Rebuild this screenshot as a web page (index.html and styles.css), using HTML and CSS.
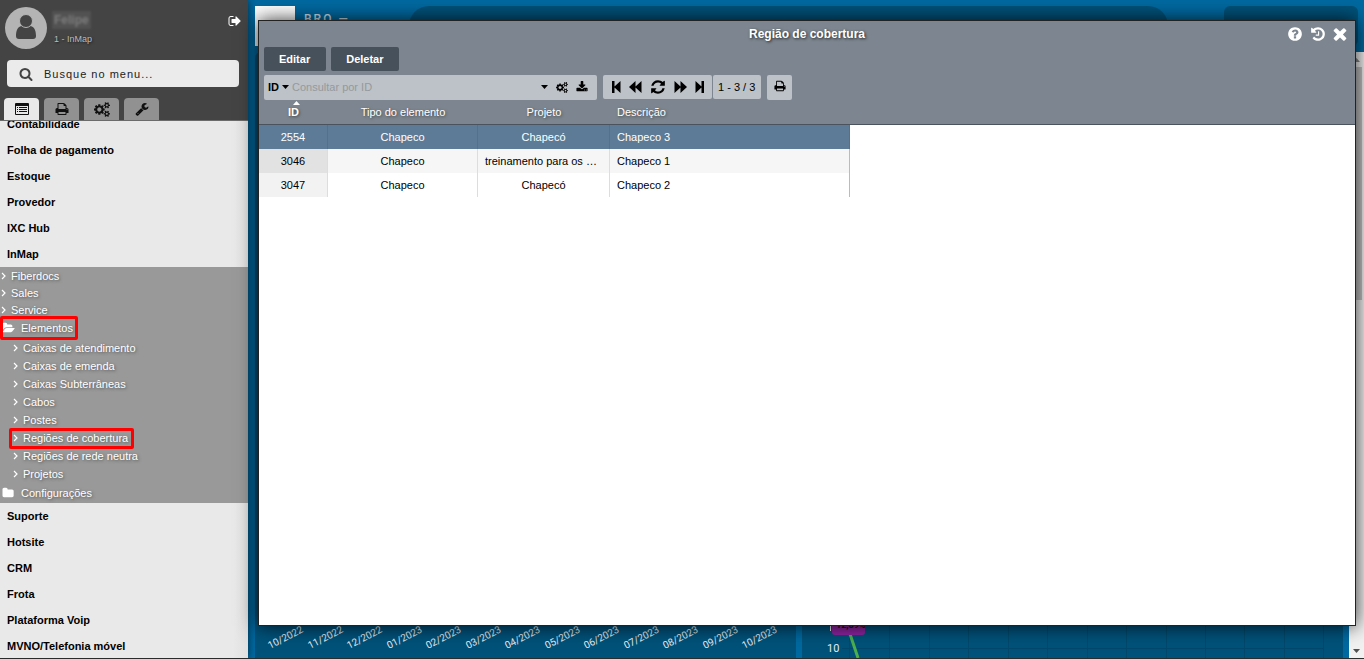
FILE: index.html
```html
<!DOCTYPE html>
<html lang="pt-BR">
<head>
<meta charset="utf-8">
<title>Região de cobertura</title>
<link rel="stylesheet" href="styles.css">
</head>
<body>
<svg class="sprite" aria-hidden="true">
  <symbol id="signout" viewBox="0 0 1792 1792"><path d="M704 1440q0 4 1 20t.5 26.500-3 23.500-10 19.500-20.500 6.500h-320q-119 0-203.500-84.500t-84.500-203.500v-704q0-119 84.500-203.500t203.500-84.500h320q13 0 22.500 9.500t9.500 22.500q0 4 1 20t.5 26.500-3 23.500-10 19.500-20.500 6.500h-320q-66 0-113 47t-47 113v704q0 66 47 113t113 47h312l11.500 1 11.500 3 8 5.500 7 9 2 13.500zm928-544q0 26-19 45l-544 544q-19 19-45 19t-45-19-19-45v-288h-448q-26 0-45-19t-19-45v-384q0-26 19-45t45-19h448v-288q0-26 19-45t45-19 45 19l544 544q19 19 19 45z"/></symbol>
  <symbol id="search" viewBox="0 0 1792 1792"><path d="M1216 832q0-185-131.500-316.500t-316.500-131.500-316.500 131.500-131.500 316.500 131.500 316.500 316.500 131.500 316.500-131.500 131.500-316.500zm512 832q0 52-38 90t-90 38q-54 0-90-38l-343-342q-179 124-399 124-143 0-273.500-55.500t-225-150-150-225-55.500-273.500 55.500-273.500 150-225 225-150 273.500-55.500 273.500 55.500 225 150 150 225 55.500 273.500q0 220-124 399l343 343q37 37 37 90z"/></symbol>
  <symbol id="list" viewBox="0 0 14 12"><path fill-rule="evenodd" d="M1 0h12q1 0 1 1v10q0 1-1 1H1q-1 0-1-1V1q0-1 1-1zM1 3v8h12V3zM2 4h1v1H2zM4 4h8v1H4zM2 6h1v1H2zM4 6h8v1H4zM2 8h1v1H2zM4 8h8v1H4z"/></symbol>
  <symbol id="print" viewBox="0 0 1792 1792"><path d="M448 1536h896v-256h-896v256zm0-640h896v-384h-160q-40 0-68-28t-28-68v-160h-640v640zm1152 64q0-26-19-45t-45-19-45 19-19 45 19 45 45 19 45-19 19-45zm128 0v416q0 13-9.500 22.500t-22.500 9.500h-224v160q0 40-28 68t-68 28h-960q-40 0-68-28t-28-68v-160h-224q-13 0-22.500-9.500t-9.500-22.500v-416q0-79 56.500-135.500t135.500-56.500h64v-544q0-40 28-68t68-28h672q40 0 88 20t76 48l152 152q28 28 48 76t20 88v256h64q79 0 135.500 56.500t56.500 135.500z"/></symbol>
  <symbol id="cogs" viewBox="0 0 1920 1792"><path d="M896 896q0-106-75-181t-181-75-181 75-75 181 75 181 181 75 181-75 75-181zm768 512q0-52-38-90t-90-38-90 38-38 90q0 53 37.500 90.500t90.500 37.500 90.500-37.500 37.500-90.500zm0-1024q0-52-38-90t-90-38-90 38-38 90q0 53 37.500 90.500t90.500 37.500 90.500-37.500 37.500-90.500zm-384 421v185q0 10-7 19.500t-16 10.500l-155 24q-11 35-32 76 34 48 90 115 7 11 7 20 0 12-7 19-23 30-82.500 89.500t-78.500 59.500q-11 0-21-7l-115-90q-37 19-77 31-11 108-23 155-7 24-30 24h-186q-11 0-20-7.500t-10-17.500l-23-153q-34-10-75-31l-118 89q-7 7-20 7-11 0-21-8-144-133-144-160 0-9 7-19 10-14 41-53t47-61q-23-44-35-82l-152-24q-10-1-17-9.500t-7-19.500v-185q0-10 7-19.500t16-10.500l155-24q11-35 32-76-34-48-90-115-7-11-7-20 0-12 7-20 22-30 82-89t79-59q11 0 21 7l115 90q34-18 77-32 11-108 23-154 7-24 30-24h186q11 0 20 7.500t10 17.500l23 153q34 10 75 31l118-89q8-7 20-7 11 0 21 8 144 133 144 160 0 8-7 19-12 16-42 54t-45 60q23 48 34 82l152 23q10 2 17 10.500t7 19.500zm640 533v140q0 16-149 31-12 27-30 52 51 113 51 138 0 4-4 7-122 71-124 71-8 0-46-47t-52-68q-20 2-30 2t-30-2q-14 21-52 68t-46 47q-2 0-124-71-4-3-4-7 0-25 51-138-18-25-30-52-149-15-149-31v-140q0-16 149-31 13-29 30-52-51-113-51-138 0-4 4-7 4-2 35-20t59-34 30-16q8 0 46 46.500t52 67.500q20-2 30-2t30 2q51-71 92-112l6-2q4 0 124 70 4 3 4 7 0 25-51 138 17 23 30 52 149 15 149 31zm0-1024v140q0 16-149 31-12 27-30 52 51 113 51 138 0 4-4 7-122 71-124 71-8 0-46-47t-52-68q-20 2-30 2t-30-2q-14 21-52 68t-46 47q-2 0-124-71-4-3-4-7 0-25 51-138-18-25-30-52-149-15-149-31v-140q0-16 149-31 13-29 30-52-51-113-51-138 0-4 4-7 4-2 35-20t59-34 30-16q8 0 46 46.500t52 67.500q20-2 30-2t30 2q51-71 92-112l6-2q4 0 124 70 4 3 4 7 0 25-51 138 17 23 30 52 149 15 149 31z"/></symbol>
  <symbol id="wrench" viewBox="0 0 1792 1792"><path d="M448 1472q0-26-19-45t-45-19-45 19-19 45 19 45 45 19 45-19 19-45zm644-420l-682 682q-37 37-90 37-52 0-91-37l-106-108q-38-36-38-90 0-53 38-91l681-681q39 98 114.500 173.500t173.500 114.500zm634-435q0 39-23 106-47 134-164.500 217.500t-258.500 83.500q-185 0-316.500-131.500t-131.500-316.500 131.500-316.500 316.500-131.500q58 0 121.500 16.500t107.500 46.500q16 11 16 28t-16 28l-293 169v224l193 107q5-3 79-48.500t135.500-81 70.500-35.500q15 0 23.500 10t8.500 25z"/></symbol>
  <symbol id="refresh" viewBox="0 0 1792 1792"><path d="M1639 1056q0 5-1 7-64 268-268 434.500t-478 166.500q-146 0-282.500-55t-243.500-157l-129 129q-19 19-45 19t-45-19-19-45v-448q0-26 19-45t45-19h448q26 0 45 19t19 45-19 45l-137 137q71 66 161 102t187 36q134 0 250-65t186-179q11-17 53-117 8-23 30-23h192q13 0 22.500 9.500t9.500 22.500zm25-800v448q0 26-19 45t-45 19h-448q-26 0-45-19t-19-45 19-45l138-138q-148-137-349-137-134 0-250 65t-186 179q-11 17-53 117-8 23-30 23h-199q-13 0-22.500-9.500t-9.500-22.500v-7q65-268 270-434.500t480-166.500q146 0 284 55.500t245 156.500l130-129q19-19 45-19t45 19 19 45z"/></symbol>
  <symbol id="download" viewBox="0 0 1792 1792"><path d="M1344 1344q0-26-19-45t-45-19-45 19-19 45 19 45 45 19 45-19 19-45zm256 0q0-26-19-45t-45-19-45 19-19 45 19 45 45 19 45-19 19-45zm128-224v320q0 40-28 68t-68 28h-1472q-40 0-68-28t-28-68v-320q0-40 28-68t68-28h465l135 136q58 56 136 56t136-56l136-136h464q40 0 68 28t28 68zm-325-569q17 41-14 70l-448 448q-18 19-45 19t-45-19l-448-448q-31-29-14-70 17-39 59-39h256v-448q0-26 19-45t45-19h256q26 0 45 19t19 45v448h256q42 0 59 39z"/></symbol>
  <symbol id="history" viewBox="0 0 1792 1792"><path d="M1664 896q0 156-61 298t-164 245-245 164-298 61q-172 0-327-72.500t-264-204.500q-7-10-6.500-22.500t8.500-20.500l137-138q10-9 25-9 16 2 23 12 73 95 179 147t225 52q104 0 198.500-40.500t163.500-109.500 109.500-163.500 40.500-198.500-40.500-198.500-109.500-163.500-163.500-109.500-198.500-40.500q-98 0-188 35.500t-160 101.500l137 138q31 30 14 69-17 40-59 40h-448q-26 0-45-19t-19-45v-448q0-42 40-59 39-17 69 14l130 129q107-101 244.500-156.500t284.500-55.500q156 0 298 61t245 164 164 245 61 298zm-640-288v448q0 14-9 23t-23 9h-320q-14 0-23-9t-9-23v-64q0-14 9-23t23-9h224v-352q0-14 9-23t23-9h64q14 0 23 9t9 23z"/></symbol>
  <symbol id="help" viewBox="0 0 1792 1792"><path d="M1024 1376v-192q0-14-9-23t-23-9h-192q-14 0-23 9t-9 23v192q0 14 9 23t23 9h192q14 0 23-9t9-23zm256-672q0-88-55.500-163t-138.500-116-170-41q-243 0-371 213-15 24 8 42l132 100q7 6 19 6 16 0 25-12 53-68 86-92 34-24 86-24 48 0 85.500 26t37.500 59q0 38-20 61t-68 45q-63 28-115.500 86.500t-52.500 125.500v36q0 14 9 23t23 9h192q14 0 23-9t9-23q0-19 21.500-49.500t54.500-49.500q32-18 49-28.500t46-35 44.500-48 28-60.500 12.500-81zm384 192q0 209-103 385.500t-279.500 279.500-385.500 103-385.500-103-279.500-279.500-103-385.500 103-385.500 279.500-279.500 385.500-103 385.500 103 279.500 279.500 103 385.500z"/></symbol>
  <symbol id="close" viewBox="256 256 1280 1408"><path d="M1490 1322q0 40-28 68l-136 136q-28 28-68 28t-68-28l-294-294-294 294q-28 28-68 28t-68-28l-136-136q-28-28-28-68t28-68l294-294-294-294q-28-28-28-68t28-68l136-136q28-28 68-28t68 28l294 294 294-294q28-28 68-28t68 28l136 136q28 28 28 68t-28 68l-294 294 294 294q28 28 28 68z"/></symbol>
  <symbol id="folder" viewBox="0 0 1920 1792"><path d="M1728 608v704q0 92-66 158t-158 66h-1216q-92 0-158-66t-66-158v-960q0-92 66-158t158-66h320q92 0 158 66t66 158v32h672q92 0 158 66t66 158z"/></symbol>
  <symbol id="folder-open" viewBox="0 0 1920 1792"><path d="M1879 952q0 31-31 66l-336 396q-43 51-120.500 86.500t-143.500 35.500h-1088q-34 0-60.500-13t-26.500-43q0-31 31-66l336-396q43-51 120.500-86.500t143.500-35.500h1088q34 0 60.500 13t26.500 43zm-343-344v160h-832q-94 0-197 47.500t-164 119.500l-337 396-5 6q0-4-.5-12.500t-.5-12.500v-960q0-92 66-158t158-66h320q92 0 158 66t66 158v32h544q92 0 158 66t66 158z"/></symbol>
  <symbol id="chevron" viewBox="0 0 5 8"><path d="M1 1l3 3-3 3" fill="none" stroke="currentColor" stroke-width="1.200"/></symbol>
  <symbol id="caret" viewBox="0 0 7 4"><path d="M0 0h7L3.500 4z"/></symbol>
  <symbol id="first" viewBox="0 0 9 12"><path d="M0 0h2.500v5.500L8.500 0v12l-6-5.500V12H0z"/></symbol>
  <symbol id="prev" viewBox="0 0 13 12"><path d="M0 6l6.500-6v5.500L12.500 0v12l-6-5.500V12z"/></symbol>
</svg>

<div class="app">
  <aside class="sidebar">
    <header class="profile">
      <div class="user">
        <svg class="avatar" viewBox="0 0 42 42"><circle cx="21" cy="21" r="21" fill="#b4b4b4"/><path d="M17.500 19C12 19 11 25 11 29q0 3 3 3h14q3 0 3-3c0-4-1-10-6.500-10-2 1.500-5 1.500-7 0z" fill="#444"/><circle cx="21" cy="14" r="6.500" fill="#444" stroke="#b4b4b4"/></svg>
        <div class="who"><span class="name">Felipe</span><span class="company">1 - InMap</span></div>
        <button class="logout" aria-label="Sair"><svg class="ic14"><use href="#signout"/></svg></button>
      </div>
      <label class="menu-search"><svg class="ic14"><use href="#search"/></svg><input type="text" placeholder="Busque no menu..." aria-label="Busque no menu"></label>
      <nav class="tabs">
        <button class="tab active" aria-label="Menu"><svg class="ic-list"><use href="#list"/></svg></button>
        <button class="tab" aria-label="Relatórios"><svg class="ic14"><use href="#print"/></svg></button>
        <button class="tab" aria-label="Configurações"><svg class="ic-cogs"><use href="#cogs"/></svg></button>
        <button class="tab" aria-label="Ferramentas"><svg class="ic14"><use href="#wrench"/></svg></button>
      </nav>
    </header>
    <nav class="menu-view">
      <div class="menu">
        <a class="item" href="#">Contabilidade</a>
        <a class="item" href="#">Folha de pagamento</a>
        <a class="item" href="#">Estoque</a>
        <a class="item" href="#">Provedor</a>
        <a class="item" href="#">IXC Hub</a>
        <a class="item" href="#">InMap</a>
        <div class="submenu">
          <a class="sub" href="#"><svg class="chev"><use href="#chevron"/></svg>Fiberdocs</a>
          <a class="sub" href="#"><svg class="chev"><use href="#chevron"/></svg>Sales</a>
          <a class="sub" href="#"><svg class="chev"><use href="#chevron"/></svg>Service</a>
          <a class="group marked" href="#"><svg class="fold"><use href="#folder-open"/></svg>Elementos</a>
          <div class="leaves">
            <a class="leaf" href="#"><svg class="chev"><use href="#chevron"/></svg>Caixas de atendimento</a>
            <a class="leaf" href="#"><svg class="chev"><use href="#chevron"/></svg>Caixas de emenda</a>
            <a class="leaf" href="#"><svg class="chev"><use href="#chevron"/></svg>Caixas Subterrâneas</a>
            <a class="leaf" href="#"><svg class="chev"><use href="#chevron"/></svg>Cabos</a>
            <a class="leaf" href="#"><svg class="chev"><use href="#chevron"/></svg>Postes</a>
            <a class="leaf marked" href="#"><svg class="chev"><use href="#chevron"/></svg>Regiões de cobertura</a>
            <a class="leaf" href="#"><svg class="chev"><use href="#chevron"/></svg>Regiões de rede neutra</a>
            <a class="leaf" href="#"><svg class="chev"><use href="#chevron"/></svg>Projetos</a>
          </div>
          <a class="group" href="#"><svg class="fold"><use href="#folder"/></svg>Configurações</a>
        </div>
        <a class="item" href="#">Suporte</a>
        <a class="item" href="#">Hotsite</a>
        <a class="item" href="#">CRM</a>
        <a class="item" href="#">Frota</a>
        <a class="item" href="#">Plataforma Voip</a>
        <a class="item" href="#">MVNO/Telefonia móvel</a>
      </div>
    </nav>
  </aside>

  <main class="dashboard">
    <header class="topbar">
      <div class="logo"></div>
      <span class="brand">BRO —</span>
      <div class="pill"></div>
      <div class="box"></div>
    </header>
    <div class="board">
      <section class="panel">
        <svg class="axis" viewBox="0 0 540 40" width="540" height="40">
          <g class="months">
            <text transform="translate(15 31) rotate(-27)">10/2022</text>
            <text transform="translate(55 31) rotate(-27)">11/2022</text>
            <text transform="translate(94 31) rotate(-27)">12/2022</text>
            <text transform="translate(134 31) rotate(-27)">01/2023</text>
            <text transform="translate(173 31) rotate(-27)">02/2023</text>
            <text transform="translate(213 31) rotate(-27)">03/2023</text>
            <text transform="translate(252 31) rotate(-27)">04/2023</text>
            <text transform="translate(292 31) rotate(-27)">05/2023</text>
            <text transform="translate(331 31) rotate(-27)">06/2023</text>
            <text transform="translate(371 31) rotate(-27)">07/2023</text>
            <text transform="translate(410 31) rotate(-27)">08/2023</text>
            <text transform="translate(450 31) rotate(-27)">09/2023</text>
            <text transform="translate(489 31) rotate(-27)">10/2023</text>
          </g>
        </svg>
      </section>
      <section class="panel">
        <svg class="axis" viewBox="0 0 541 40" width="541" height="40">
          <path class="grid" d="M47.500 0v40M87.500 0v40M127.500 0v40M166.500 0v40M206.500 0v40M245.500 0v40M285.500 0v40M324.500 0v40M364.500 0v40M403.500 0v40M442.500 0v40M482.500 0v40M521.500 0v40M40 30.500h482"/>
          <text class="tick" x="25" y="34">10</text>
          <path d="M28.500 6v7" stroke="#e6eef2"/>
          <path d="M46 10l10 30" fill="none" stroke="#4caf50" stroke-width="3"/>
          <rect x="30" y="-10" width="33" height="27" rx="3" fill="#8e24a0"/>
          <text class="value" x="34" y="10">12,89%</text>
        </svg>
      </section>
      <div class="scroll"><svg class="arrow flip"><use href="#caret"/></svg><div class="thumb"></div><svg class="arrow"><use href="#caret"/></svg></div>
    </div>
  </main>

  <section class="window" aria-labelledby="wtitle">
    <header class="titlebar">
      <h1 class="title" id="wtitle">Região de cobertura</h1>
      <div class="controls">
        <button aria-label="Ajuda"><svg class="ic16"><use href="#help"/></svg></button>
        <button aria-label="Histórico"><svg class="ic16"><use href="#history"/></svg></button>
        <button aria-label="Fechar"><svg class="ic-close"><use href="#close"/></svg></button>
      </div>
    </header>
    <div class="actions"><button class="act">Editar</button><button class="act">Deletar</button></div>
    <div class="toolbar">
      <div class="query">
        <button class="field">ID<svg class="caret"><use href="#caret"/></svg></button>
        <input type="text" placeholder="Consultar por ID" aria-label="Consultar por ID">
        <button aria-label="Opções"><svg class="caret"><use href="#caret"/></svg></button>
        <button aria-label="Filtros"><svg class="ic-cogs-s"><use href="#cogs"/></svg></button>
        <button aria-label="Exportar"><svg class="ic11"><use href="#download"/></svg></button>
      </div>
      <div class="pager">
        <div class="nav">
          <button aria-label="Primeira"><svg class="ic-first"><use href="#first"/></svg></button>
          <button aria-label="Anterior"><svg class="ic-prev"><use href="#prev"/></svg></button>
          <button aria-label="Atualizar"><svg class="ic16"><use href="#refresh"/></svg></button>
          <button aria-label="Próxima"><svg class="ic-prev mirror"><use href="#prev"/></svg></button>
          <button aria-label="Última"><svg class="ic-first mirror"><use href="#first"/></svg></button>
        </div>
        <span class="count">1 - 3 / 3</span>
      </div>
      <button class="printer" aria-label="Imprimir"><svg class="ic11"><use href="#print"/></svg></button>
    </div>
    <table class="records">
      <colgroup><col class="c-id"><col class="c-type"><col class="c-proj"><col class="c-desc"><col></colgroup>
      <thead><tr><th class="sorted"><svg class="sort"><use href="#caret"/></svg>ID</th><th>Tipo do elemento</th><th>Projeto</th><th class="left">Descrição</th><th></th></tr></thead>
      <tbody>
        <tr class="selected"><td>2554</td><td>Chapeco</td><td>Chapecó</td><td class="left">Chapeco 3</td><td></td></tr>
        <tr class="odd"><td>3046</td><td>Chapeco</td><td class="left">treinamento para os …</td><td class="left">Chapeco 1</td><td></td></tr>
        <tr><td>3047</td><td>Chapeco</td><td>Chapecó</td><td class="left">Chapeco 2</td><td></td></tr>
      </tbody>
    </table>
  </section>
</div>
</body>
</html>
```
FILE: styles.css
```css
*, *::after { box-sizing: border-box; }
body { margin: 0; font: 11px/18px "Liberation Sans", Arial, sans-serif; color: #000; }
button { margin: 0; padding: 0; border: 0; background: none; font: inherit; color: inherit; display: flex; align-items: center; justify-content: center; }
input { border: 0; outline: 0; background: none; padding: 0; font: inherit; color: #222; min-width: 0; flex: 1; }
a { color: inherit; text-decoration: none; }
svg { fill: currentColor; flex: none; display: block; }
.sprite { position: absolute; width: 0; height: 0; }
.ic11 { width: 12px; height: 12px; }
.ic14 { width: 14px; height: 14px; }
.ic16 { width: 16px; height: 16px; }
.ic-list { width: 14px; height: 12px; }
.ic-cogs { width: 16px; height: 15px; }
.ic-cogs-s { width: 12px; height: 11px; }
.ic-close { width: 14px; height: 15px; }
.ic-first { width: 9px; height: 12px; }
.ic-prev { width: 13px; height: 12px; }
.mirror { transform: scaleX(-1); }
.caret { width: 7px; height: 4px; }

.app { position: relative; display: flex; height: 100vh; overflow: hidden; border-bottom: 1px solid #2b2b2b; }

.sidebar { width: 248px; flex: none; display: flex; flex-direction: column; background: #e9e9e9; box-shadow: 0 0 8px rgba(0,0,0,.6); z-index: 1; }
.profile { background: #444; display: flex; flex-direction: column; border-bottom: 1px solid #6b6b6b; }
.user { display: flex; padding: 7px 6px 0 5px; height: 60px; gap: 5px; }
.avatar { width: 42px; height: 42px; }
.who { flex: 1; display: flex; flex-direction: column; gap: 1px; padding-top: 4px; }
.name { align-self: flex-start; font-size: 12px; font-weight: bold; color: #7c7c7c; background: #525252; padding: 0 2px; filter: blur(1px); }
.company { font-size: 9px; color: #bbb; padding-left: 2px; text-shadow: 1px 1px 2px #222; }
.logout { height: 28px; color: #fff; }
.menu-search { margin: 0 9px 11px 7px; height: 27px; background: #ebebeb; border-radius: 4px; display: flex; align-items: center; gap: 11px; padding-left: 12px; color: #444; }
.menu-search input { letter-spacing: 1px; }
.menu-search input::placeholder { color: #222; opacity: 1; }
.tabs { display: flex; gap: 5px; padding-left: 4px; }
.tab { width: 35px; height: 22px; background: #919191; border-radius: 4px 4px 0 0; color: #111; }
.tab.active { background: #e9e9e9; }
.menu-view { flex: 1; overflow: hidden; }
.menu { margin-top: -10px; display: flex; flex-direction: column; }
.item { line-height: 26px; padding-left: 7px; font-weight: bold; background: linear-gradient(90deg, #e9e9e9 94%, #e0e0e0); }
.submenu { background: #999; color: #fff; text-shadow: 1px 1px 3px #555; }
.sub, .leaf, .group { display: flex; align-items: center; position: relative; }
.sub { height: 17px; gap: 5px; padding-left: 1px; }
.leaves { margin-top: 1px; padding-left: 13px; }
.leaf { height: 18px; gap: 5px; }
.group { height: 20px; gap: 6px; padding-left: 2px; }
.chev { width: 5px; height: 8px; }
.fold { width: 13px; height: 12px; }
.marked::after { content: ""; position: absolute; border: 3px solid #f00; border-radius: 2px; }
.group.marked::after { left: 0; top: -2px; width: 78px; height: 24px; }
.leaf.marked::after { left: -4px; top: -1px; width: 125px; height: 21px; }

.dashboard { flex: 1; min-width: 0; display: flex; flex-direction: column; background: #0069a0; padding-left: 7px; }
.topbar { display: flex; height: 52px; padding-top: 6px; }
.logo { width: 40px; height: 40px; background: #fff; }
.brand { padding: 1px 0 0 9px; width: 114px; flex: none; font: 500 12px/24px Roboto, sans-serif; letter-spacing: 2px; color: #cfe0ea; }
.pill { flex: 1; margin-right: 56px; background: #00527a; border-radius: 20px 20px 0 0; }
.box { width: 134px; height: 40px; margin-right: 6px; background: #00527a; border-radius: 6px; }
.board { flex: 1; display: flex; gap: 6px; min-height: 0; }
.panel { flex: 1; background: #00527a; display: flex; flex-direction: column; justify-content: flex-end; overflow: hidden; border-radius: 6px 6px 0 0; }
.months { font: 10px Roboto, sans-serif; fill: #e6eef2; }
.tick { font: 11px Roboto, sans-serif; fill: #e6eef2; }
.value { font: bold 9px Roboto, sans-serif; fill: #111; }
.grid { stroke: #00486c; fill: none; }
.scroll { width: 15px; background: #f1f1f1; display: flex; flex-direction: column; align-items: center; color: #505050; padding-bottom: 5px; }
.arrow { width: 7px; height: 4px; }
.flip { transform: scaleY(-1); margin: 6px 0 5px; color: #888; }
.thumb { width: 11px; height: 233px; background: #c1c1c1; margin-bottom: auto; }

.window { position: absolute; top: 20px; right: 8px; bottom: 32px; left: 258px; z-index: 2; display: flex; flex-direction: column; background: #fff; border: 1px solid #222; box-shadow: 0 0 18px rgba(0,0,0,.8); }
.titlebar { display: grid; grid-template-columns: 1fr auto 1fr; align-items: center; height: 26px; background: #7d8690; color: #fff; }
.title { grid-column: 2; margin: 0; font-size: 12px; line-height: 24px; text-shadow: 1px 1px 3px #222; }
.controls { display: flex; gap: 7px; justify-content: flex-end; padding-right: 8px; }
.actions { display: flex; gap: 5px; padding: 0 5px 4px; background: #7d8690; }
.act { height: 24px; padding: 0 16px 0 15px; background: #47515c; color: #fff; font-weight: bold; border-radius: 2px; }
.toolbar { display: flex; gap: 6px; padding: 0 5px; background: #7d8690; height: 25px; align-items: flex-start; }
.query, .nav, .count, .printer { background: #bcc2c7; border-radius: 2px; }
.query { width: 333px; height: 25px; display: flex; align-items: center; gap: 8px; padding: 0 9px 1px 4px; }
.field { gap: 3px; font-weight: bold; }
.query input { margin-left: -5px; }
.query input::placeholder { color: #96999c; opacity: 1; }
.pager { display: flex; gap: 1px; height: 24px; }
.nav { display: flex; align-items: center; gap: 8px; padding: 0 8px 0 9px; }
.count { line-height: 24px; padding: 0 6px 0 5px; }
.printer { width: 25px; height: 25px; padding-bottom: 4px; }

.records { width: 100%; border-collapse: separate; border-spacing: 0; table-layout: fixed; text-align: center; }
.c-id { width: 69px; }
.c-type { width: 150px; }
.c-proj { width: 132px; }
.c-desc { width: 240px; }
th, td { padding: 0 7px; height: 24px; white-space: nowrap; overflow: hidden; text-overflow: ellipsis; }
th { height: 25px; font-weight: normal; color: #fff; background: #7d8690; border-bottom: 1px solid #4b545e; text-shadow: 1px 1px 3px #444; }
.sorted { font-weight: bold; position: relative; }
.sort { position: absolute; left: 34px; top: 1px; width: 7px; height: 4px; transform: scaleY(-1); }
.left { text-align: left; }
td { border-right: 1px solid #ddd; }
td:nth-child(4) { border-right-color: #bbb; }
td:first-child { background: #f2f2f2; }
td:last-child { border: 0; }
.odd td { background: #f6f6f6; }
.odd td:first-child { background: #e2e2e2; }
.selected td { background: #5d7b96; color: #fff; border-right-color: #54708a; }
.records td:last-child { background: #fff; }
```
